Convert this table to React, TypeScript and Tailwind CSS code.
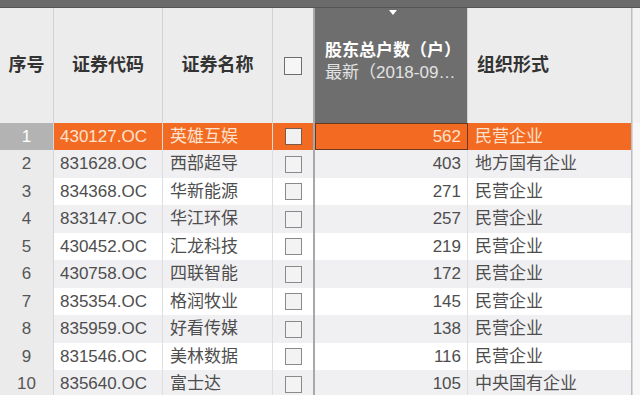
import React from "react";

const rows = [
  ["1", "430127.OC", "英雄互娱", "562", "民营企业"],
  ["2", "831628.OC", "西部超导", "403", "地方国有企业"],
  ["3", "834368.OC", "华新能源", "271", "民营企业"],
  ["4", "833147.OC", "华江环保", "257", "民营企业"],
  ["5", "430452.OC", "汇龙科技", "219", "民营企业"],
  ["6", "430758.OC", "四联智能", "172", "民营企业"],
  ["7", "835354.OC", "格润牧业", "145", "民营企业"],
  ["8", "835959.OC", "好看传媒", "138", "民营企业"],
  ["9", "831546.OC", "美林数据", "116", "民营企业"],
  ["10", "835640.OC", "富士达", "105", "中央国有企业"],
];

const font = { fontFamily: '"Liberation Sans","Noto Sans CJK SC",sans-serif' };

function Box({ sel }: { sel?: boolean }) {
  return (
    <div
      className={
        "w-[17px] h-[17px] border " +
        (sel ? "border-[#7a5a48] bg-[#f1f1f1]" : "border-[#8a8a8a] bg-[#f3f3f3]")
      }
    />
  );
}

export default function App() {
  return (
    <div className="w-[640px] h-[395px] overflow-hidden bg-white flex flex-col" style={font}>
      {/* top strip */}
      <div className="h-[8px] shrink-0 bg-[#6b6b6b] border-b border-[#555]" />
      {/* header */}
      <div className="h-[115px] shrink-0 flex bg-[#ececec] text-[#333] font-bold text-[18px]">
        <div className="w-[54px] border-r border-[#d2d2d2] flex items-center justify-center">序号</div>
        <div className="w-[109px] border-r border-[#d2d2d2] flex items-center justify-center">证券代码</div>
        <div className="w-[110px] border-r border-[#d2d2d2] flex items-center justify-center">证券名称</div>
        <div className="w-[42px] border-r-2 border-[#a8a8a8] flex items-center justify-center">
          <div className="w-[18px] h-[18px] border border-[#6e6e6e] bg-[#f6f6f6]" />
        </div>
        <div className="relative w-[153px] border-r border-[#d2d2d2] bg-[#6e6e6e] flex flex-col justify-center pl-[10px] pb-[8px] text-white text-[17px]">
          <div className="absolute top-[2px] left-[74px] w-0 h-0 border-l-[4px] border-r-[4px] border-t-[5px] border-l-transparent border-r-transparent border-t-white" />
          <div className="leading-[22px] whitespace-nowrap">股东总户数（户）</div>
          <div className="leading-[22px] whitespace-nowrap font-normal text-[#e3e3e3]">最新（2018-09…</div>
        </div>
        <div className="w-[164px] border-r border-[#bdbdbd] flex items-center pl-[9px]">组织形式</div>
        <div className="flex-1 bg-[#f2f2f2] border-l border-[#d8d8d8]" />
      </div>
      {/* body */}
      <div className="flex flex-col text-[17px]">
        {rows.map((r, i) => {
          const sel = i === 0;
          const even = i % 2 === 1;
          const rowBg = sel ? "bg-[#f36b22]" : even ? "bg-[#f0f0f2]" : "bg-white";
          const txt = sel ? "text-[#fde2cf]" : "text-[#4e4e4e]";
          const h = i % 2 === 0 ? "h-[27px]" : "h-[28px]";
          return (
            <div key={i} className={"flex shrink-0 " + h}>
              <div
                className={
                  "w-[54px] border-r border-[#d6d6d6] flex items-center justify-center " +
                  (sel ? "bg-[#b3b3b3] text-white" : "bg-[#ebebeb] text-[#555]")
                }
              >
                {r[0]}
              </div>
              <div className={"w-[109px] border-r border-[#dedede] flex items-center pl-[6px] " + rowBg + " " + txt}>
                {r[1]}
              </div>
              <div className={"w-[110px] border-r border-[#dedede] flex items-center pl-[7px] " + rowBg + " " + txt}>
                {r[2]}
              </div>
              <div className={"w-[42px] border-r-2 border-[#a8a8a8] flex items-center justify-center " + rowBg}>
                <Box sel={sel} />
              </div>
              <div
                className={
                  "w-[153px] flex items-center justify-end pr-[6px] " +
                  rowBg +
                  " " +
                  txt +
                  (sel ? " border border-[#6a3a20]" : " border-r border-[#dedede]")
                }
              >
                {r[3]}
              </div>
              <div className={"w-[164px] border-r border-[#bdbdbd] flex items-center pl-[7px] " + rowBg + " " + txt}>
                {r[4]}
              </div>
              <div className="flex-1 border-l border-[#d8d8d8] bg-[#f7f7f7]" />
            </div>
          );
        })}
      </div>
    </div>
  );
}
